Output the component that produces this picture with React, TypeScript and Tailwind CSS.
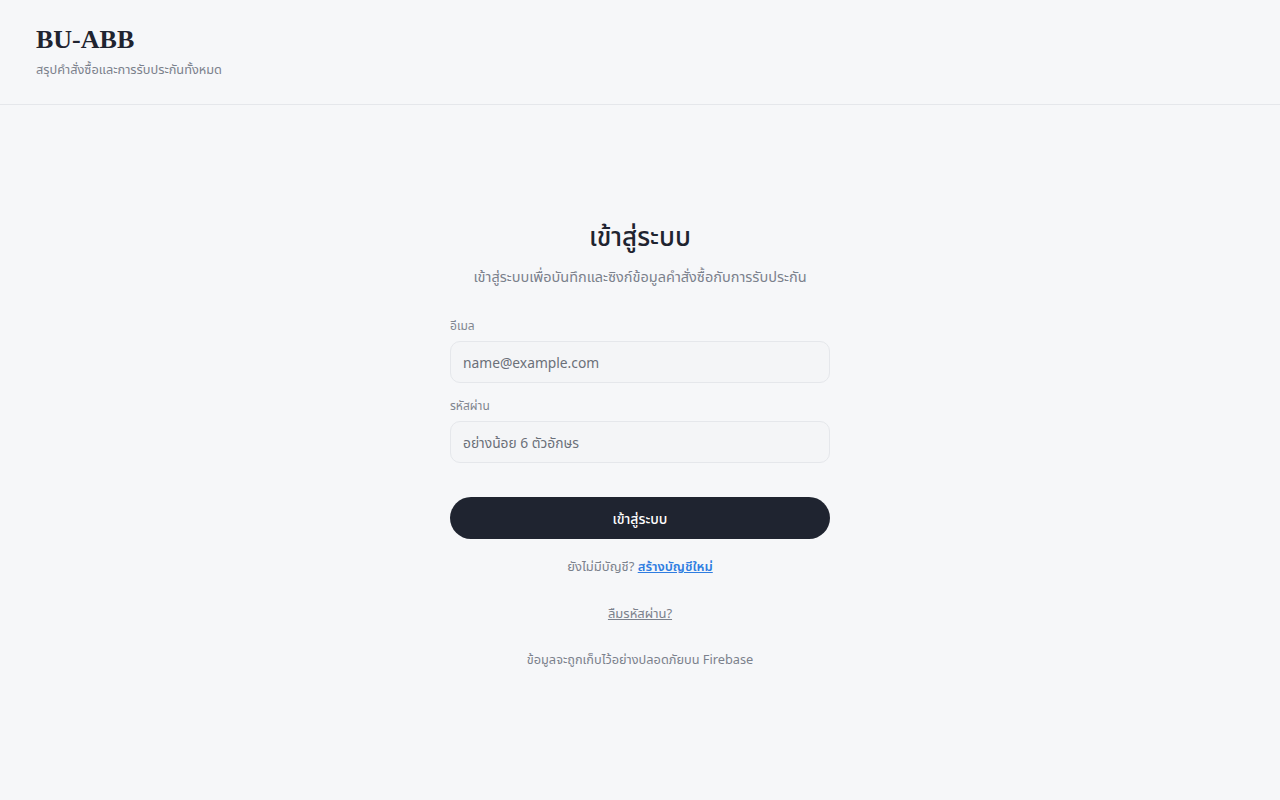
export default function App() {
  return (
    <div
      className="min-h-screen bg-[#f6f7f9] text-[#1f2430]"
      style={{ fontFamily: '"Noto Sans", "Noto Sans Thai", sans-serif' }}
    >
      {/* Header */}
      <header className="h-[105px] border-b border-[#e5e7eb] px-9 pt-[24px]">
        <h1 className="font-['Liberation_Serif',serif] text-[26px] font-bold leading-[32px] text-[#1f2430]">
          BU-ABB
        </h1>
        <p className="mt-[3px] text-[12.75px] leading-5 text-[#7b818c]">สรุปคำสั่งซื้อและการรับประกันทั้งหมด</p>
      </header>

      {/* Login form */}
      <main className="flex justify-center pt-[113px]">
        <div className="w-[380px] flex flex-col">
          <h2 className="text-center text-[26px] font-medium leading-9 text-[#1f2430]">เข้าสู่ระบบ</h2>
          <p className="mt-[10px] text-center text-[14.5px] leading-6 text-[#7b818c]">
            เข้าสู่ระบบเพื่อบันทึกและซิงก์ข้อมูลคำสั่งซื้อกับการรับประกัน
          </p>

          <label className="mt-[28px] text-[12px] leading-5 text-[#80858f]">อีเมล</label>
          <input
            type="email"
            placeholder="name@example.com"
            className="mt-[5px] h-[42px] w-full rounded-[10px] border border-[#e5e7eb] bg-[#f4f5f7] px-3 text-[13.8px] text-[#1f2430] placeholder:text-[#6b7079] outline-none"
          />

          <label className="mt-[13px] text-[12px] leading-5 text-[#80858f]">รหัสผ่าน</label>
          <input
            type="password"
            placeholder="อย่างน้อย 6 ตัวอักษร"
            className="mt-[5px] h-[42px] w-full rounded-[10px] border border-[#e5e7eb] bg-[#f4f5f7] px-3 text-[13.8px] text-[#1f2430] placeholder:text-[#6b7079] outline-none"
          />

          <button className="mt-[34px] h-[42px] w-full rounded-full bg-[#1f2430] text-[14px] font-medium text-white">
            เข้าสู่ระบบ
          </button>

          <p className="mt-[17px] text-center text-[13px] leading-5 text-[#7b818c]">
            ยังไม่มีบัญชี?{' '}
            <a href="#" className="font-semibold text-[#2f7de1] underline">สร้างบัญชีใหม่</a>
          </p>

          <div className="mt-[27px] flex justify-center">
            <a href="#" className="text-[13px] leading-5 text-[#7b818c] underline">ลืมรหัสผ่าน?</a>
          </div>

          <p className="mt-[26px] text-center text-[12.75px] leading-5 text-[#7b818c]">
            ข้อมูลจะถูกเก็บไว้อย่างปลอดภัยบน Firebase
          </p>
        </div>
      </main>
    </div>
  )
}
